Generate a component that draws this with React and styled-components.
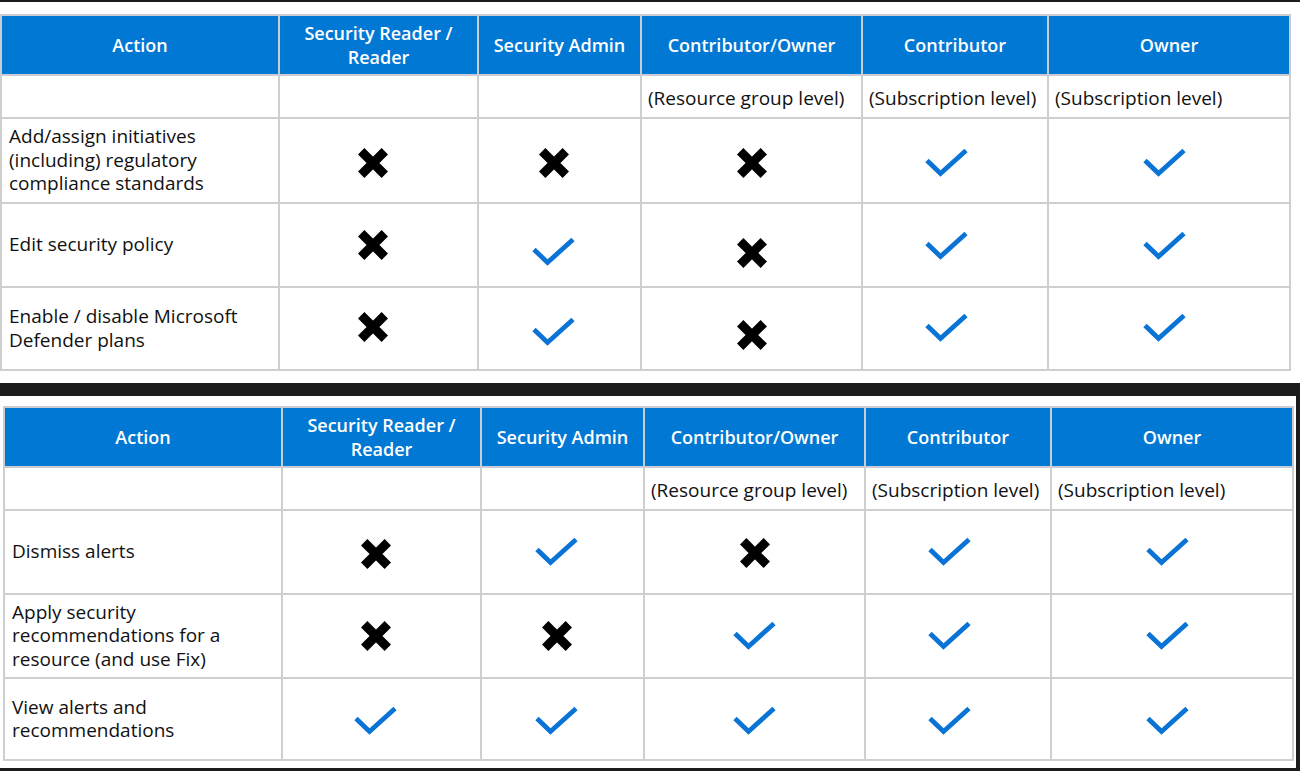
import React from "react";
import styled, { createGlobalStyle } from "styled-components";

const GlobalStyle = createGlobalStyle`
  html, body {
    margin: 0;
    padding: 0;
    background: #1c1c1c;
  }
  body {
    font-family: "Open Sans", "Noto Sans", sans-serif;
  }
`;

const columns = [
  { title: "Action", width: 278, level: "", dx: 0 },
  { title: ["Security Reader /", "Reader"], width: 199, level: "", dx: -6 },
  { title: "Security Admin", width: 163, level: "", dx: -6 },
  { title: "Contributor/Owner", width: 221, level: "(Resource group level)", dx: 0 },
  { title: "Contributor", width: 186, level: "(Subscription level)", dx: -9 },
  { title: "Owner", width: 242, level: "(Subscription level)", dx: -5 },
];

const topRows = [
  {
    action: ["Add/assign initiatives", "(including) regulatory", "compliance standards"],
    marks: ["x", "x", "x", "v", "v"],
    dy: [2, 2, 2, 2, 2],
  },
  {
    action: ["Edit security policy"],
    marks: ["x", "v", "x", "v", "v"],
    dy: [0, 7, 8, 1, 1],
  },
  {
    action: ["Enable / disable Microsoft", "Defender plans"],
    marks: ["x", "v", "x", "v", "v"],
    dy: [-2, 3, 6, -1, -1],
  },
];

const bottomRows = [
  {
    action: ["Dismiss alerts"],
    marks: ["x", "v", "x", "v", "v"],
    dy: [2, 0, 1, 0, 0],
  },
  {
    action: ["Apply security", "recommendations for a", "resource (and use Fix)"],
    marks: ["x", "x", "v", "v", "v"],
    dy: [0, 0, 0, 0, 0],
  },
  {
    action: ["View alerts and", "recommendations"],
    marks: ["v", "v", "v", "v", "v"],
    dy: [2, 2, 2, 2, 2],
  },
];

const Cross = () => (
  <svg width="30" height="30" viewBox="0 0 30 30">
    <path d="M3.2 3.2 L26.8 26.8 M26.8 3.2 L3.2 26.8" stroke="#000" strokeWidth="9" strokeLinecap="butt" fill="none" />
  </svg>
);

const Check = () => (
  <svg width="43" height="30" viewBox="0 0 43 30">
    <path d="M2 12.5 L15.5 25.5 L41 2.5" stroke="#0a74d6" strokeWidth="4.8" strokeLinecap="butt" strokeLinejoin="miter" fill="none" />
  </svg>
);

const PermissionTable = ({ rows, heights }) => (
  <Grid>
    <colgroup>
      {columns.map((c, i) => (
        <col key={i} style={{ width: c.width }} />
      ))}
    </colgroup>
    <thead>
      <Row $h={heights[0]}>
        {columns.map((c, i) => (
          <HeadCell key={i}>
            {Array.isArray(c.title)
              ? c.title.map((t, j) => <div key={j}>{t}</div>)
              : c.title}
          </HeadCell>
        ))}
      </Row>
    </thead>
    <tbody>
      <Row $h={heights[1]}>
        {columns.map((c, i) => (
          <LevelCell key={i}>{c.level}</LevelCell>
        ))}
      </Row>
      {rows.map((r, i) => (
        <Row key={i} $h={heights[i + 2]}>
          <ActionCell>
            {r.action.map((line, j) => (
              <div key={j}>{line}</div>
            ))}
          </ActionCell>
          {r.marks.map((m, j) => (
            <MarkCell key={j}>
              <Mark $dx={columns[j + 1].dx} $dy={r.dy[j]}>
                {m === "x" ? <Cross /> : <Check />}
              </Mark>
            </MarkCell>
          ))}
        </Row>
      ))}
    </tbody>
  </Grid>
);

export default function App() {
  return (
    <>
      <GlobalStyle />
      <Page>
        <Slide $width={1300} $pad="12px 11px 12px 0">
          <PermissionTable rows={topRows} heights={[60, 43, 85, 84, 83]} />
        </Slide>
        <Slide $width={1296} $pad="10px 6px 7px 3px">
          <PermissionTable rows={bottomRows} heights={[60, 43, 84, 84, 82]} />
        </Slide>
      </Page>
    </>
  );
}

const Page = styled.main`
  width: 1300px;
  height: 771px;
  box-sizing: border-box;
  padding-top: 2px;
  display: flex;
  flex-direction: column;
  gap: 13px;
  overflow: hidden;
`;

const Slide = styled.section`
  background: #fff;
  width: ${(p) => p.$width}px;
  padding: ${(p) => p.$pad};
  box-sizing: border-box;
`;

const Grid = styled.table`
  border-collapse: collapse;
  table-layout: fixed;
  width: 1289px;
  color: #111;
  font-family: "Open Sans", "Noto Sans", sans-serif;
`;

const Row = styled.tr`
  height: ${(p) => p.$h}px;
`;

const HeadCell = styled.th`
  background: #0078d4;
  color: #fff;
  font-size: 18px;
  font-weight: 600;
  line-height: 24px;
  text-align: center;
  vertical-align: middle;
  border: 2px solid #c9ccd0;
  padding: 0 4px;
`;

const LevelCell = styled.td`
  font-size: 19px;
  line-height: 24px;
  text-align: left;
  vertical-align: middle;
  white-space: nowrap;
  border: 2px solid #cfcfcf;
  padding: 3px 6px 0;
`;

const ActionCell = styled.td`
  font-size: 19px;
  line-height: 23.5px;
  vertical-align: middle;
  white-space: nowrap;
  border: 2px solid #cfcfcf;
  padding: 0 7px;
`;

const MarkCell = styled.td`
  vertical-align: middle;
  border: 2px solid #cfcfcf;
  padding: 0;
`;

const Mark = styled.div`
  display: flex;
  justify-content: center;
  align-items: center;
  transform: translate(${(p) => p.$dx}px, ${(p) => p.$dy}px);
`;
